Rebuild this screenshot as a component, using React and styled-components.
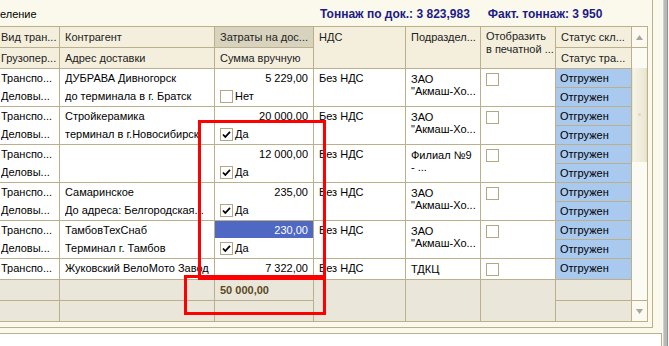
import styled, { createGlobalStyle } from "styled-components";

const GlobalStyle = createGlobalStyle`
  html, body {
    margin: 0;
    padding: 0;
    background: #fbf9ec;
  }
  body {
    font-family: "Liberation Sans", Arial, sans-serif;
    font-size: 11px;
    color: #000;
    overflow: hidden;
  }
  * { box-sizing: border-box; }
`;

const LINE = "#bcb08a";
const COLS = "60px 155px 99px 92px 75px 75px 76px";

const rows = [
  {
    kind: ["Транспо...", "Деловы..."],
    agent: ["ДУБРАВА Дивногорск", "до терминала в г. Братск"],
    sum: "5 229,00",
    manual: false,
    division: ["ЗАО", "\"Акмаш-Хо..."],
    status: ["Отгружен", "Отгружен"],
  },
  {
    kind: ["Транспо...", "Деловы..."],
    agent: ["Стройкерамика", "терминал в г.Новосибирск"],
    sum: "20 000,00",
    manual: true,
    division: ["ЗАО", "\"Акмаш-Хо..."],
    status: ["Отгружен", "Отгружен"],
  },
  {
    kind: ["Транспо...", "Деловы..."],
    agent: ["", ""],
    sum: "12 000,00",
    manual: true,
    division: ["Филиал №9", "- ..."],
    status: ["Отгружен", "Отгружен"],
  },
  {
    kind: ["Транспо...", "Деловы..."],
    agent: ["Самаринское", "До адреса:  Белгородская..."],
    sum: "235,00",
    manual: true,
    division: ["ЗАО", "\"Акмаш-Хо..."],
    status: ["Отгружен", "Отгружен"],
  },
  {
    kind: ["Транспо...", "Деловы..."],
    agent: ["ТамбовТехСнаб", "Терминал г. Тамбов"],
    sum: "230,00",
    manual: true,
    active: true,
    division: ["ЗАО", "\"Акмаш-Хо..."],
    status: ["Отгружен", "Отгружен"],
  },
  {
    single: true,
    kind: ["Транспо..."],
    agent: ["Жуковский ВелоМото Завод"],
    sum: "7 322,00",
    division: ["ТДКЦ"],
    status: ["Отгружен"],
  },
];

function CheckBox({ checked }) {
  return (
    <Box>
      {checked && (
        <svg width="9" height="9" viewBox="0 0 9 9">
          <path d="M1 4.5 L3.3 7 L8 1.8" fill="none" stroke="#000" strokeWidth="1.8" />
        </svg>
      )}
    </Box>
  );
}

function Arrow({ down }) {
  return (
    <svg width="7" height="5" viewBox="0 0 7 5">
      <path d={down ? "M0 0 H7 L3.5 5 Z" : "M0 5 H7 L3.5 0 Z"} fill="#a9a69a" />
    </svg>
  );
}

export default function App() {
  return (
    <>
      <GlobalStyle />
      <Page>
        <Left>
          <Frame>
            <TopStrip>
              <Caption>еление</Caption>
              <Total>Тоннаж по док.: 3 823,983</Total>
              <Total>Факт. тоннаж: 3 950</Total>
            </TopStrip>
            <Table>
              <Grid>
                <Head>
                  <HCell $c={1} $r={1} $first>Вид тран...</HCell>
                  <HCell $c={2} $r={1}>Контрагент</HCell>
                  <HCell $c={3} $r={1} $sorted>Затраты на дос...</HCell>
                  <HCell $c={4} $span>НДС</HCell>
                  <HCell $c={5} $span>Подраздел...</HCell>
                  <HCell $c={6} $span $wrap>Отобразить<br />в печатной ...</HCell>
                  <HCell $c={7} $r={1}>Статус скл...</HCell>
                  <HCell $c={1} $r={2} $first>Грузопер...</HCell>
                  <HCell $c={2} $r={2}>Адрес доставки</HCell>
                  <HCell $c={3} $r={2}>Сумма вручную</HCell>
                  <HCell $c={7} $r={2}>Статус тра...</HCell>
                </Head>

                {rows.map((r, i) => (
                  <Row key={i} $single={r.single}>
                    <Cell>
                      {r.kind.map((t, k) => <Line key={k}>{t}</Line>)}
                    </Cell>
                    <Cell $pad={5}>
                      {r.agent.map((t, k) => <Line key={k}>{t}</Line>)}
                    </Cell>
                    <Cell $flush>
                      <Amount $active={r.active}>{r.sum}</Amount>
                      {!r.single && (
                        <Flag>
                          <CheckBox checked={r.manual} />
                          {r.manual ? "Да" : "Нет"}
                        </Flag>
                      )}
                    </Cell>
                    <Cell $pad={5}>
                      <Line>Без НДС</Line>
                    </Cell>
                    <Cell $pad={5}>
                      <Wrapped>
                        {r.division.map((t, k) => <div key={k}>{t}</div>)}
                      </Wrapped>
                    </Cell>
                    <Cell $pad={5}>
                      <TopBox>
                        <CheckBox />
                      </TopBox>
                    </Cell>
                    <Cell $flush>
                      {r.status.map((t, k) => <Status key={k}>{t}</Status>)}
                    </Cell>
                  </Row>
                ))}

                <Foot>
                  <FCell $c={1} $r={1} />
                  <FCell $c={2} $r={1} />
                  <FCell $c={3} $r={1} $bold>50 000,00</FCell>
                  <FCell $c={4} $span />
                  <FCell $c={5} $span />
                  <FCell $c={6} $span />
                  <FCell $c={7} $r={1} />
                  <FCell $c={1} $r={2} />
                  <FCell $c={2} $r={2} />
                  <FCell $c={3} $r={2} />
                  <FCell $c={7} $r={2} />
                </Foot>
              </Grid>

              <Scroll>
                <ScrollButton>
                  <Arrow />
                </ScrollButton>
                <Track>
                  <Thumb>
                    <Grip />
                  </Thumb>
                </Track>
                <ScrollButton $bottom>
                  <Arrow down />
                </ScrollButton>
              </Scroll>
            </Table>
          </Frame>
          <Notes />
        </Left>
        <Splitter />

        <Mark style={{ left: 198, top: 120, width: 128, height: 160 }} />
        <Mark style={{ left: 184, top: 275, width: 142, height: 40 }} />
      </Page>
    </>
  );
}

const Page = styled.div`
  position: relative;
  display: flex;
  width: 669px;
  height: 346px;
  overflow: hidden;
`;

const Left = styled.div`
  width: 662px;
  display: flex;
  flex-direction: column;
  gap: 5px;
`;

const Frame = styled.div`
  width: 653px;
  padding: 0 4px 5px 0;
  border-right: 1px solid ${LINE};
  border-bottom: 1px solid ${LINE};
`;

const TopStrip = styled.div`
  height: 26px;
  display: flex;
  align-items: center;
  gap: 18px;
  padding-top: 1px;
`;

const Caption = styled.div`
  width: 302px;
  flex-shrink: 0;
`;

const Total = styled.div`
  font-weight: bold;
  font-size: 12px;
  color: #1b1b87;
  white-space: nowrap;
`;

const Table = styled.div`
  display: flex;
  width: 648px;
  border-top: 1px solid ${LINE};
  border-right: 1px solid ${LINE};
  border-bottom: 1px solid ${LINE};
`;

const Grid = styled.div`
  width: 632px;
  background: #fff;
`;

const Head = styled.div`
  display: grid;
  grid-template-columns: ${COLS};
  grid-template-rows: 21px 21px;
  background: #f3efdc;
`;

const HCell = styled.div`
  grid-column: ${(p) => p.$c};
  grid-row: ${(p) => (p.$span ? "1 / span 2" : p.$r)};
  border-right: 1px solid ${LINE};
  border-bottom: 1px solid ${LINE};
  padding: ${(p) => (p.$wrap ? "3px 4px 0 5px" : `0 4px 0 ${p.$first ? 1 : 5}px`)};
  line-height: ${(p) => (p.$wrap ? "13px" : "20px")};
  white-space: nowrap;
  overflow: hidden;
  color: #222;
  background: ${(p) => (p.$sorted ? "#d8d3be" : "transparent")};
`;

const Row = styled.div`
  display: grid;
  grid-template-columns: ${COLS};
  height: ${(p) => (p.$single ? "21px" : "38px")};
  border-bottom: 1px solid ${LINE};
`;

const Cell = styled.div`
  border-right: 1px solid ${LINE};
  padding-left: ${(p) => (p.$flush ? 0 : p.$pad ? `${p.$pad}px` : "1px")};
  overflow: hidden;
  white-space: nowrap;
  display: flex;
  flex-direction: column;
`;

const Line = styled.div`
  height: 18px;
  line-height: 18px;
  overflow: hidden;
`;

const Amount = styled.div`
  height: 17px;
  line-height: 18px;
  text-align: right;
  padding-right: 5px;
  background: ${(p) => (p.$active ? "#4e68c4" : "transparent")};
  color: ${(p) => (p.$active ? "#fff" : "#000")};
`;

const Flag = styled.div`
  display: flex;
  align-items: center;
  gap: 2px;
  height: 20px;
  padding-left: 5px;
`;

const Box = styled.span`
  width: 13px;
  height: 13px;
  border: 1px solid #b3a883;
  background: #fff;
  display: inline-flex;
  align-items: center;
  justify-content: center;
`;

const Wrapped = styled.div`
  padding-top: 4px;
  line-height: 12px;
`;

const TopBox = styled.div`
  padding-top: 4px;
  display: flex;
`;

const Status = styled.div`
  height: 18px;
  line-height: 18px;
  padding-left: 4px;
  background: #a9c9ef;
  flex: 1;
  & + & {
    border-top: 1px solid ${LINE};
  }
`;

const Foot = styled.div`
  display: grid;
  grid-template-columns: ${COLS};
  grid-template-rows: 21px 20px;
  background: #ebe6da;
`;

const FCell = styled.div`
  grid-column: ${(p) => p.$c};
  grid-row: ${(p) => (p.$span ? "1 / span 2" : p.$r)};
  border-right: 1px solid ${LINE};
  border-bottom: ${(p) => (p.$span || p.$r === 2 ? "none" : `1px solid ${LINE}`)};
  padding-left: 5px;
  line-height: 20px;
  font-weight: ${(p) => (p.$bold ? "bold" : "normal")};
  color: #5a4a1c;
`;

const Scroll = styled.div`
  width: 15px;
  display: flex;
  flex-direction: column;
  background: #fbfaf3;
`;

const ScrollButton = styled.div`
  height: 21px;
  display: flex;
  align-items: center;
  justify-content: center;
  background: #fbf9f0;
  border-top: ${(p) => (p.$bottom ? `1px solid ${LINE}` : "none")};
  border-bottom: ${(p) => (p.$bottom ? "none" : `1px solid ${LINE}`)};
`;

const Track = styled.div`
  flex: 1;
  padding-top: 20px;
`;

const Thumb = styled.div`
  height: 94px;
  background: linear-gradient(to right, #f7f4e6, #ebe6d2);
  border-left: 1px solid #ece7d4;
  border-right: 1px solid #e2dcc5;
  display: flex;
  justify-content: center;
  padding-top: 45px;
`;

const Grip = styled.div`
  width: 3px;
  height: 3px;
  border-radius: 50%;
  background: #ddd8c6;
`;

const Notes = styled.div`
  flex: 1;
  background: #fff;
  border-top: 1px solid ${LINE};
  border-right: 1px solid ${LINE};
`;

const Splitter = styled.div`
  width: 5px;
  margin-left: 1px;
  background: #b9b9b9;
  border-left: 1px solid #d0d0d0;
  border-right: 1px solid #8f8f8f;
`;

const Mark = styled.div`
  position: absolute;
  border: 3px solid #ff0000;
  pointer-events: none;
`;
